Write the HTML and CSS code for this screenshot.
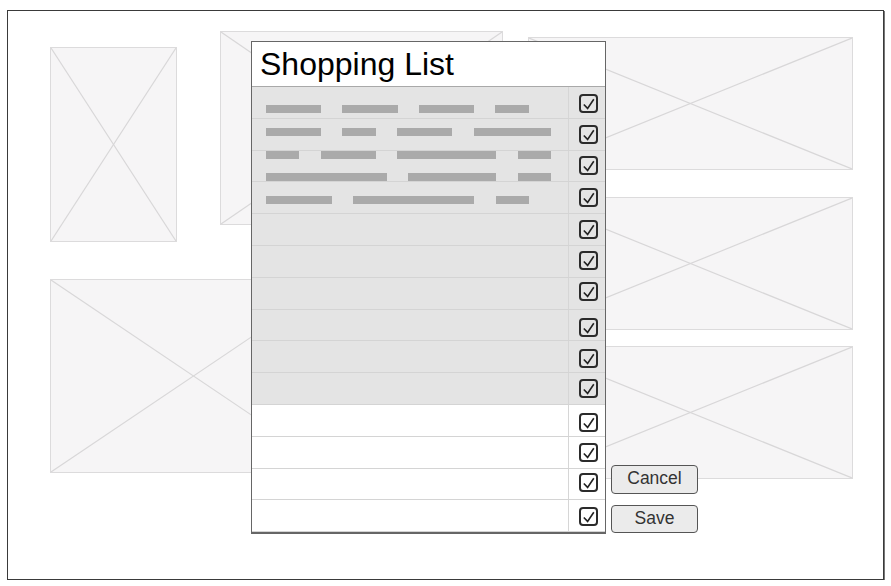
FILE: index.html
```html
<!DOCTYPE html>
<html lang="en">
<head>
    <meta charset="UTF-8">
    <meta name="viewport" content="width=device-width, initial-scale=1.0">
    <title>Shopping List</title>
    <link rel="stylesheet" href="styles.css">
</head>
<body>
    <div class="frame">
        <!-- image placeholders behind the dialog -->
        <div class="ph ph-1"><svg><line x1="0" y1="0" x2="100%" y2="100%"/><line x1="0" y1="100%" x2="100%" y2="0"/></svg></div>
        <div class="ph ph-2"><svg><line x1="0" y1="0" x2="100%" y2="100%"/><line x1="0" y1="100%" x2="100%" y2="0"/></svg></div>
        <div class="ph ph-3"><svg><line x1="0" y1="0" x2="100%" y2="100%"/><line x1="0" y1="100%" x2="100%" y2="0"/></svg></div>
        <div class="ph ph-4"><svg><line x1="0" y1="0" x2="100%" y2="100%"/><line x1="0" y1="100%" x2="100%" y2="0"/></svg></div>
        <div class="ph ph-5"><svg><line x1="0" y1="0" x2="100%" y2="100%"/><line x1="0" y1="100%" x2="100%" y2="0"/></svg></div>
        <div class="ph ph-6"><svg><line x1="0" y1="0" x2="100%" y2="100%"/><line x1="0" y1="100%" x2="100%" y2="0"/></svg></div>

        <div class="list">
            <div class="list-head">Shopping List</div>
            <div class="list-body" id="list-body">
                <div class="lines">
                    <div class="line"><span class="bar w55"></span><span class="bar w55"></span><span class="bar w55"></span><span class="bar w33"></span></div>
                    <div class="line"><span class="bar w55"></span><span class="bar w33"></span><span class="bar w55"></span><span class="bar w77"></span></div>
                    <div class="line"><span class="bar w33"></span><span class="bar w55"></span><span class="bar w99"></span><span class="bar w33"></span></div>
                    <div class="line"><span class="bar w121"></span><span class="bar w88"></span><span class="bar w33"></span></div>
                    <div class="line"><span class="bar w66"></span><span class="bar w121"></span><span class="bar w33"></span></div>
                </div>
            </div>
        </div>

        <div class="actions">
            <button class="btn btn-cancel">Cancel</button>
            <button class="btn btn-save">Save</button>
        </div>
    </div>
    <script>
        document.addEventListener("DOMContentLoaded", function () {
            const body = document.getElementById("list-body");
            const lines = body.querySelector(".lines");
            const check = '<svg width="19" height="19" viewBox="0 0 19 19">' +
                '<rect x="1" y="1" width="17" height="17" rx="3" fill="none" stroke="#2b2b2b" stroke-width="2"/>' +
                '<polyline points="4.8,10.5 8.6,14.4 14.8,5.2" fill="none" stroke="#222" stroke-width="1.6"/></svg>';

            // 10 shaded rows, then 4 plain ones
            for (let i = 0; i < 14; i++) {
                const row = document.createElement("div");
                row.className = i < 10 ? "row shaded" : "row";
                row.innerHTML = '<div class="cell"></div><div class="check">' + check + '</div>';
                body.insertBefore(row, lines);
            }
        });
    </script>
</body>
</html>
```

FILE: styles.css
```css
body {
    margin: 0;
    font-family: "Liberation Sans", Arial, sans-serif;
    background: #fff;
}
.frame {
    position: relative;
    box-sizing: border-box;
    width: 877px;
    height: 570px;
    margin: 10px 0 0 7px;
    border: 1px solid #3a3a3a;
    box-shadow: 1px 1px 0 #777;
}
.ph {
    position: absolute;
    box-sizing: border-box;
    background: #f6f5f6;
    border: 1px solid #dcdbdc;
}
.ph svg {
    display: block;
    width: 100%;
    height: 100%;
}
.ph line {
    stroke: #d8d7d8;
    stroke-width: 1.2;
}
.ph-1 { left: 42px; top: 36px; width: 127px; height: 195px; }
.ph-2 { left: 212px; top: 20px; width: 283px; height: 194px; }
.ph-3 { left: 520px; top: 26px; width: 325px; height: 133px; }
.ph-4 { left: 520px; top: 186px; width: 325px; height: 133px; }
.ph-5 { left: 520px; top: 335px; width: 325px; height: 133px; }
.ph-6 { left: 42px; top: 268px; width: 287px; height: 194px; }

.list {
    position: absolute;
    left: 243px;
    top: 30px;
    width: 355px;
    box-sizing: border-box;
    border: 1px solid #666;
    border-bottom-width: 2px;
    background: #fff;
}
.list-head {
    height: 44px;
    line-height: 44px;
    padding-left: 8px;
    font-size: 32px;
    color: #000;
    border-bottom: 1px solid #a9a9a9;
}
.list-body {
    position: relative;
}
.row {
    display: flex;
    box-sizing: border-box;
    height: 31.8px;
    border-bottom: 1px solid #d4d4d4;
}
.row:last-of-type {
    border-bottom: none;
}
.row.shaded {
    background: #e4e4e4;
}
.cell {
    flex: 1;
    border-right: 1px solid #d6d6d6;
}
.check {
    width: 36px;
    display: flex;
    align-items: center;
    padding-left: 10px;
    box-sizing: border-box;
}
.check svg {
    display: block;
}
/* the checkboxes sit a little off-centre in some rows */
.row:nth-child(1) .check { padding-top: 3px; }
.row:nth-child(6) .check { padding-bottom: 2px; }
.row:nth-child(7) .check { padding-bottom: 4px; }
.row:nth-child(8) .check { padding-top: 5px; }
.row:nth-child(9) .check { padding-top: 3px; }
.row:nth-child(11) .check { padding-top: 4px; }
.row:nth-child(13) .check { padding-bottom: 2px; }
.row:nth-child(14) .check { padding-top: 1px; }
.lines {
    position: absolute;
    left: 14px;
    top: 18px;
    display: flex;
    flex-direction: column;
    gap: 14.8px;
}
.line {
    display: flex;
    gap: 21.3px;
}
.bar {
    height: 8px;
    background: #aaa;
}
.w33 { width: 33.4px; }
.w55 { width: 55.2px; }
.w66 { width: 66px; }
.w77 { width: 77.4px; }
.w88 { width: 88px; }
.w99 { width: 99.3px; }
.w121 { width: 121px; }

.actions {
    position: absolute;
    left: 603px;
    top: 454px;
    display: flex;
    flex-direction: column;
    gap: 11px;
}
.btn {
    box-sizing: border-box;
    width: 87px;
    padding: 0 0 2px;
    font-family: "Liberation Sans", Arial, sans-serif;
    font-size: 17.5px;
    color: #333;
    background: #ebebeb;
    border: 1.5px solid #555;
    border-radius: 4px;
}
.btn-cancel { height: 29px; }
.btn-save { height: 28px; }
```
